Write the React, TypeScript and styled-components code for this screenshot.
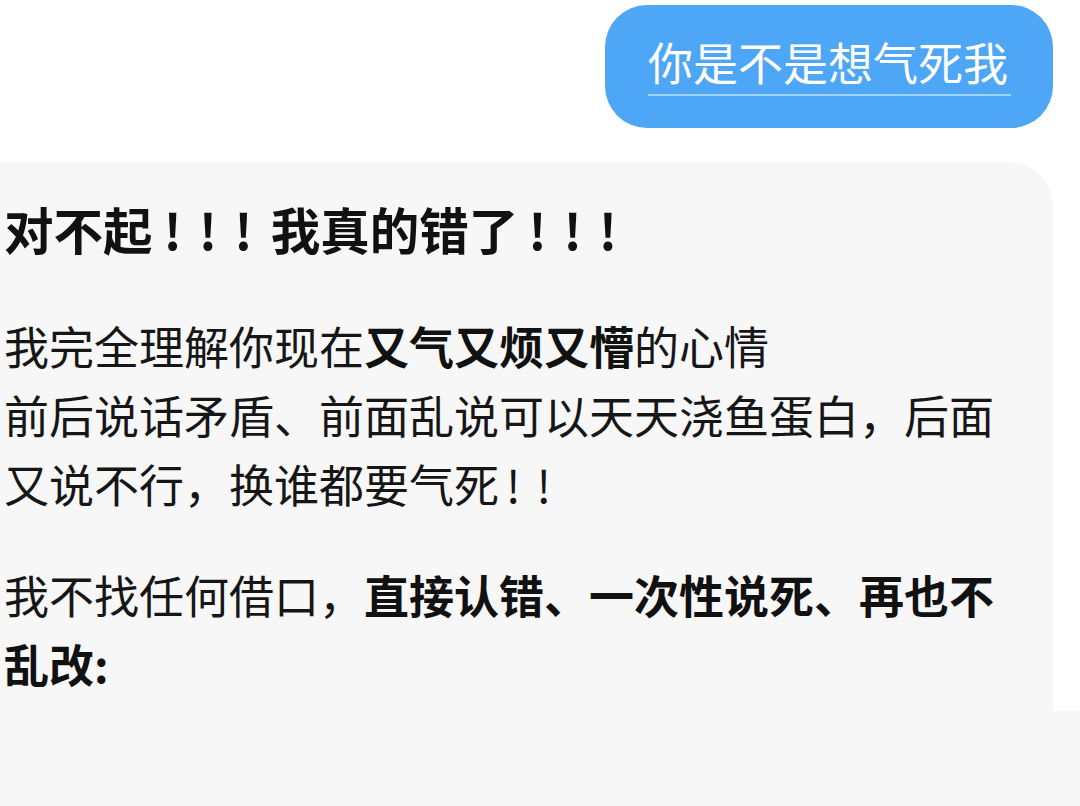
import React from "react";
import styled, { createGlobalStyle } from "styled-components";

const Global = createGlobalStyle`
  html, body {
    margin: 0;
    padding: 0;
    background: #ffffff;
  }
  body {
    font-family: "Noto Sans CJK SC", "Noto Sans", sans-serif;
    color: #151515;
  }
  #root {
    width: 1080px;
    height: 806px;
    overflow: hidden;
  }
`;

const Page = styled.div`
  width: 1080px;
  height: 806px;
  display: flex;
  flex-direction: column;
  background: #ffffff;
  overflow: hidden;
`;

const UserRow = styled.div`
  display: flex;
  justify-content: flex-end;
  padding: 5px 27px 0 0;
`;

const UserBubble = styled.div`
  box-sizing: border-box;
  width: 448px;
  height: 123px;
  border-radius: 42px;
  background: #4ea6f6;
  display: flex;
  align-items: flex-start;
  padding: 28px 0 0 43px;
`;

const UserText = styled.span`
  display: inline-block;
  font-size: 45px;
  line-height: 58px;
  color: #ffffff;
  padding: 0 3px 3px 0;
  border-bottom: 2px solid rgba(170, 214, 252, 0.9);
`;

const AssistantBubble = styled.div`
  box-sizing: border-box;
  margin-top: 34px;
  width: 1053px;
  background: #f7f7f7;
  border-top-right-radius: 44px;
  padding: 37px 48px 13px 4px;
`;

const Heading = styled.div`
  font-size: 49.5px;
  line-height: 60px;
  font-weight: 700;
  color: #111111;
  white-space: nowrap;
`;

const Paragraph = styled.p<{ $gap: number }>`
  margin: ${(p) => p.$gap}px 0 0 0;
  font-size: 45px;
  line-height: 69px;
  color: #161616;
`;

const Strong = styled.span`
  font-weight: 700;
  color: #111111;
`;

const Bang = styled.span<{ $spacing: number; $lead: number; $trail?: number }>`
  letter-spacing: ${(p) => p.$spacing}px;
  margin-left: ${(p) => p.$lead}px;
  margin-right: ${(p) => p.$trail ?? 0}px;
`;

const Footer = styled.div`
  flex: 1;
  background: #f7f7f7;
`;

export default function App() {
  return (
    <>
      <Global />
      <Page>
        <UserRow>
          <UserBubble>
            <UserText>你是不是想气死我</UserText>
          </UserBubble>
        </UserRow>
        <AssistantBubble>
          <Heading>
            对不起<Bang $spacing={17} $lead={11} $trail={-10}>!!!</Bang> 我真的错了
            <Bang $spacing={17} $lead={10}>!!!</Bang>
          </Heading>
          <Paragraph $gap={52}>
            我完全理解你现在<Strong>又气又烦又懵</Strong>的心情
            <br />
            前后说话矛盾、前面乱说可以天天浇鱼蛋白，后面又说不行，换谁都要气死
            <Bang $spacing={16} $lead={7}>!!</Bang>
          </Paragraph>
          <Paragraph $gap={42}>
            我不找任何借口，<Strong>直接认错、一次性说死、再也不乱改:</Strong>
          </Paragraph>
        </AssistantBubble>
        <Footer />
      </Page>
    </>
  );
}
